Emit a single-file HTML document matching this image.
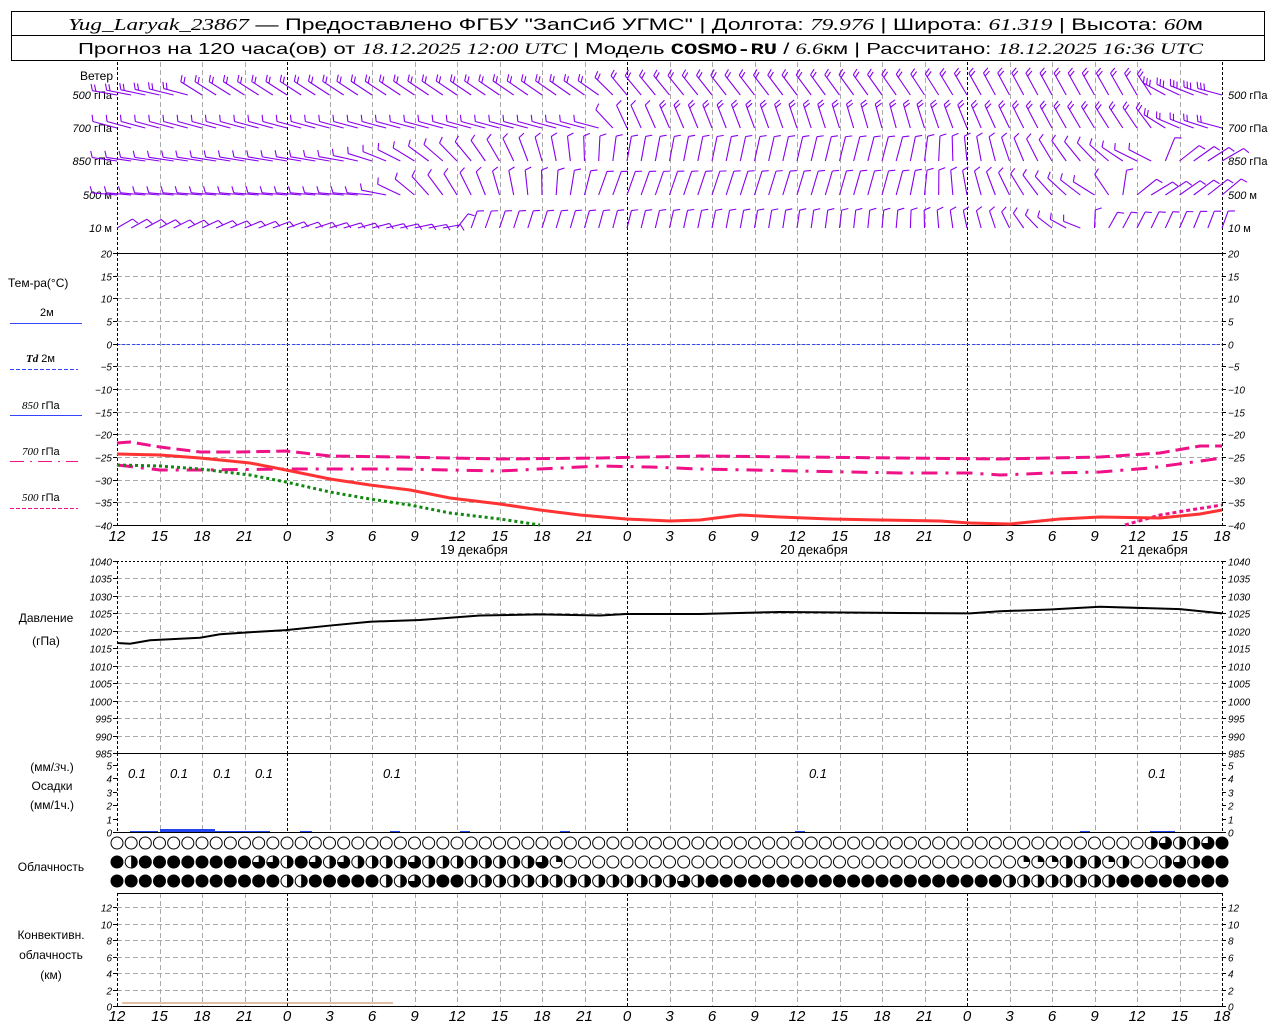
<!DOCTYPE html>
<html><head><meta charset="utf-8"><style>
html,body{margin:0;padding:0;background:#fff;}
svg{display:block;}
text{font-family:"Liberation Sans",sans-serif;fill:#000;}
.it{font-family:"Liberation Serif",serif;font-style:italic;}
.n{font-family:"Liberation Sans",sans-serif;font-style:italic;font-size:10px;}
</style></head><body>
<svg id="s" xmlns="http://www.w3.org/2000/svg" width="1280" height="1024" viewBox="0 0 1280 1024">
<rect x="0" y="0" width="1280" height="1024" fill="#fff"/>
<rect x="11.5" y="11.5" width="1253" height="49" fill="none" stroke="#000"/>
<line x1="11" y1="35.5" x2="1265" y2="35.5" stroke="#000"/>
<text x="68" y="30" font-size="17" textLength="1135" lengthAdjust="spacingAndGlyphs"><tspan class="it">Yug_Laryak_23867</tspan> — Предоставлено ФГБУ "ЗапСиб УГМС" | Долгота: <tspan class="it">79.976</tspan> | Широта: <tspan class="it">61.319</tspan> | Высота: <tspan class="it">60</tspan>м</text>
<text x="78" y="54" font-size="16" textLength="1125" lengthAdjust="spacingAndGlyphs">Прогноз на 120 часа(ов) от <tspan class="it">18.12.2025 12:00 UTC</tspan>  | Модель <tspan font-family="Liberation Mono" font-weight="bold">COSMO-RU</tspan> / <tspan class="it">6.6</tspan>км | Рассчитано: <tspan class="it">18.12.2025 16:36 UTC</tspan></text>

<g font-size="12">
<text x="113" y="80" text-anchor="end">Ветер</text>
<text x="26" y="362" font-size="11"><tspan class="it" font-weight="bold">Td</tspan>   2м</text>
<text x="8" y="287">Тем-ра(°С)</text>
<text x="40" y="316" font-size="11">2м</text>
<text x="22" y="409" font-size="11"><tspan class="it">850</tspan> гПа</text>
<text x="22" y="455" font-size="11"><tspan class="it">700</tspan> гПа</text>
<text x="22" y="501" font-size="11"><tspan class="it">500</tspan> гПа</text>
<text x="46" y="622" text-anchor="middle">Давление</text>
<text x="46" y="645" text-anchor="middle">(гПа)</text>
<text x="52" y="771" text-anchor="middle">(мм/<tspan class="it">3</tspan>ч.)</text>
<text x="52" y="790" text-anchor="middle">Осадки</text>
<text x="52" y="809" text-anchor="middle">(мм/1ч.)</text>
<text x="51" y="871" text-anchor="middle">Облачность</text>
<text x="51" y="939" text-anchor="middle">Конвективн.</text>
<text x="51" y="959" text-anchor="middle">облачность</text>
<text x="51" y="979" text-anchor="middle">(км)</text>
</g>
<line x1="10" y1="323.5" x2="82" y2="323.5" stroke="#3344ff"/>
<line x1="10" y1="369.5" x2="78" y2="369.5" stroke="#3344ff" stroke-dasharray="4,2"/>
<line x1="10" y1="415.5" x2="82" y2="415.5" stroke="#3344ff"/>
<line x1="10" y1="461.5" x2="78" y2="461.5" stroke="#ee1188" stroke-dasharray="14,6,2,6"/>
<line x1="10" y1="508.5" x2="78" y2="508.5" stroke="#ee1188" stroke-dasharray="4,2"/>
<g font-size="13" text-anchor="middle">
<text x="474" y="554">19 декабря</text>
<text x="814" y="554">20 декабря</text>
<text x="1154" y="554">21 декабря</text>
</g>
<g id="g"></g>
</svg>
<script>
var S=document.getElementById('g'),NS='http://www.w3.org/2000/svg';
function el(t,a,txt){var e=document.createElementNS(NS,t);for(var k in a)e.setAttribute(k,a[k]);if(txt!==undefined)e.textContent=txt;S.appendChild(e);return e;}
function X(h){return 117+h*14.1667;}
var panels=[[62,253],[253,525],[561,753],[753,832],[893,1006]];
for(var k=1;k<26;k++){var x=Math.round(117+k*42.5)+0.5;var mid=(k%8==4);
 panels.forEach(function(p){el('line',{x1:x,y1:p[0],x2:x,y2:p[1],stroke:mid?'#000':'#aaa','stroke-dasharray':mid?'3,2':'5,3'});});}
function hgrid(y0,y1,n,labs){for(var i=0;i<=n;i++){var y=y0+(y1-y0)*i/n;y=Math.round(y)+0.5;
 if(i>0&&i<n)el('line',{x1:117,y1:y,x2:1222,y2:y,stroke:'#aaa','stroke-dasharray':'5,3'});
 el('line',{x1:113,y1:y,x2:117,y2:y,stroke:'#000'});el('line',{x1:1222,y1:y,x2:1226,y2:y,stroke:'#000'});
 el('text',{x:112,y:y+4,'text-anchor':'end','class':'n'},labs[i]);el('text',{x:1228,y:y+4,'class':'n'},labs[i]);}}
var tl=[];for(var v=20;v>=-40;v-=5)tl.push(v==0?'0':(v<0?'\u2212'+(-v):v));hgrid(253,525,12,tl);
el('line',{x1:117,y1:344.5,x2:1222,y2:344.5,stroke:'#3344ff','stroke-dasharray':'3,2'});
var pl=[];for(v=1040;v>=985;v-=5)pl.push(v);hgrid(561,753,11,pl);
for(i=0;i<=5;i++){var y=Math.round(832-i*13.4)+0.5;el('line',{x1:113,y1:y,x2:117,y2:y,stroke:'#000'});el('line',{x1:1222,y1:y,x2:1226,y2:y,stroke:'#000'});
 el('text',{x:112,y:y+4,'text-anchor':'end','class':'n'},i);el('text',{x:1228,y:y+4,'class':'n'},i);}
for(i=0;i<7;i++){var y=Math.round(1006-i*16.5)+0.5;if(i>0)el('line',{x1:117,y1:y,x2:1222,y2:y,stroke:'#aaa','stroke-dasharray':'5,3'});
 el('line',{x1:113,y1:y,x2:117,y2:y,stroke:'#000'});el('line',{x1:1222,y1:y,x2:1226,y2:y,stroke:'#000'});
 el('text',{x:112,y:y+4,'text-anchor':'end','class':'n'},i*2);el('text',{x:1228,y:y+4,'class':'n'},i*2);}
[253.5,525.5,753.5,832.5,893.5,1006.5].forEach(function(a){el('line',{x1:117,y1:a,x2:1222,y2:a,stroke:'#000'});});
el('line',{x1:117,y1:561.5,x2:1222,y2:561.5,stroke:'#000','stroke-dasharray':'2,2'});
[117.5,1222.5].forEach(function(x){panels.forEach(function(p){el('line',{x1:x,y1:p[0],x2:x,y2:p[1],stroke:'#000','stroke-dasharray':'3,2'});});});
var labs=[];for(var k=0;k<=26;k++)labs.push((12+3*k)%24);
labs.forEach(function(h,k){var x=117+k*42.5;
 el('text',{x:x,y:541,'text-anchor':'middle','font-size':15,'font-style':'italic'},h);
 el('text',{x:x,y:1021,'text-anchor':'middle','font-size':15,'font-style':'italic'},h);});
function pts(a){return a.map(function(p){return p.join(',');}).join(' ');}
function pl2(a,st){var o={points:pts(a),fill:'none'};for(var k in st)o[k]=st[k];el('polyline',o);}
pl2([[117,443],[130,442],[160,447],[200,452],[240,452],[286,451],[330,456],[400,457],[500,459],[600,458],[700,456],[800,457],[900,458],[1000,459],[1100,457],[1160,453],[1200,446],[1222,446]],{stroke:'#ee1188','stroke-width':3,'stroke-dasharray':'14,6'});
pl2([[117,465],[160,470],[200,470],[286,469],[400,469],[500,471],[600,466],[650,467],[700,469],[800,471],[900,473],[970,473],[1000,475],[1050,473],[1100,472],[1150,468],[1222,458]],{stroke:'#ee1188','stroke-width':3,'stroke-dasharray':'16,8,3,8'});
pl2([[1125,525],[1160,515],[1190,510],[1222,505]],{stroke:'#ee1188','stroke-width':3,'stroke-dasharray':'4,3'});
pl2([[117,465],[160,466],[200,469],[250,475],[286,482],[330,492],[370,499],[410,505],[450,513],[500,519],[540,525]],{stroke:'#118811','stroke-width':3,'stroke-dasharray':'3,3'});
pl2([[117,454],[160,455],[200,458],[250,463],[286,470],[330,479],[370,485],[410,490],[450,498],[500,504],[540,510],[580,515],[626,519],[670,521],[700,520],[740,515],[780,517],[830,519],[880,520],[940,521],[970,523],[1010,524],[1060,519],[1100,517],[1160,518],[1200,514],[1222,510]],{stroke:'#ff3333','stroke-width':3});
var pr=[[117,1016.5],[130,1016.3],[150,1017.3],[200,1018],[220,1019],[250,1019.6],[286,1020.2],[330,1021.5],[370,1022.6],[420,1023.1],[480,1024.4],[540,1024.7],[600,1024.4],[626,1024.8],[700,1024.8],[780,1025.4],[900,1025.1],[970,1025],[1000,1025.6],[1050,1026.1],[1100,1026.9],[1180,1026.2],[1222,1025]];
pl2(pr.map(function(p){return [p[0],561+(1040-p[1])*3.49];}),{stroke:'#000','stroke-width':2});
[[130,158,1],[160,215,3],[215,270,1],[300,312,1],[390,400,1],[460,470,1],[560,570,1],[795,805,1],[1080,1090,1],[1150,1175,1]].forEach(function(b){el('rect',{x:b[0],y:832-b[2],width:b[1]-b[0],height:b[2],fill:'#2244ee'});});
[137,179,222,264,392,818,1157].forEach(function(x){el('text',{x:x,y:778,'text-anchor':'middle','font-size':13,'font-style':'italic'},'0.1');});
el('line',{x1:122,y1:1003,x2:393,y2:1003,stroke:'#c08050','stroke-width':1});
var rows=[
'O'.repeat(73)+'HQHHQF',
'FHFFFFFFFFQQHFQHQHHHHQHHHHHHHHQC'+'O'.repeat(31)+'OCCCHHHCHOO'+'HQHFF',
'FFFFFFFFFFFFHHFFFFFHHQHFFHHHHHHHHHHHHHHHQH'+'F'.repeat(21)+'HHHHHHHH'+'FFFFFFFF'];
rows.forEach(function(r,ri){var y=843+ri*19;for(var i=0;i<79;i++){var c=r[i]||'F';var x=X(i);
 if(c=='F'){el('circle',{cx:x,cy:y,r:6.5,fill:'#000'});continue;}
 el('circle',{cx:x,cy:y,r:6,fill:'#fff',stroke:'#000','stroke-width':1});
 if(c=='H')el('path',{d:'M'+x+','+(y-6.5)+'A6.5,6.5 0 0 1 '+x+','+(y+6.5)+'Z',fill:'#000'});
 if(c=='Q')el('path',{d:'M'+x+','+y+'L'+x+','+(y-6.5)+'A6.5,6.5 0 1 1 '+(x-6.5)+','+y+'Z',fill:'#000'});
 if(c=='C')el('path',{d:'M'+x+','+y+'L'+x+','+(y-6.5)+'A6.5,6.5 0 0 1 '+(x+6.5)+','+y+'Z',fill:'#000'});
}});
function interp(k,x){for(var i=0;i<k.length-1;i++){if(x<=k[i+1][0]){var t=(x-k[i][0])/(k[i+1][0]-k[i][0]);return k[i][1]+t*(k[i+1][1]-k[i][1]);}}return k[k.length-1][1];}
var lv=[
[95,'500',[[117,10],[190,15],[195,32],[600,35],[620,50],[900,55],[1000,62],[1150,60],[1160,30],[1222,15]],[[117,2],[190,2],[195,2],[1150,2],[1160,3],[1222,3]]],
[128,'700',[[117,15],[600,15],[620,65],[900,75],[1000,65],[1150,55],[1170,25],[1222,15]],[[117,1],[1222,2]]],
[161,'850',[[117,8],[350,10],[500,60],[620,100],[900,105],[980,80],[1100,45],[1150,20],[1170,140],[1222,150]],[[117,1],[1222,1]]],
[195,'500',[[117,5],[380,5],[420,45],[600,110],[900,105],[980,75],[1100,30],[1140,150],[1222,140]],[[117,1],[1222,1]]],
[228,'10',[[117,150],[450,170],[460,110],[900,95],[1000,70],[1080,20],[1100,120],[1222,110]],[[117,1],[1222,1]]]];
lv.forEach(function(L,li){var by=L[0];
 var unit=(li<3)?' гПа':'   м';
 var t1=el('text',{x:112,y:by+4,'text-anchor':'end','font-size':11});t1.innerHTML='<tspan font-style="italic">'+L[1]+'</tspan>'+unit;
 var t2=el('text',{x:1228,y:by+4,'font-size':11});t2.innerHTML='<tspan font-style="italic">'+L[1]+'</tspan>'+unit;
 for(var i=0;i<79;i++){var bx=X(i);var a=interp(L[2],bx)*Math.PI/180;var n=Math.round(interp(L[3],bx));
  var len=li==4?18:25;var ux=-Math.cos(a),uy=-Math.sin(a);var tx=bx+len*ux,ty=by+len*uy;
  el('line',{x1:bx,y1:by,x2:tx,y2:ty,stroke:'#8800ee','stroke-width':1.1});
  var px=Math.sin(a),py=-Math.cos(a);
  for(var f=0;f<n;f++){var sx=tx-ux*f*3.5,sy=ty-uy*f*3.5;
   el('line',{x1:sx,y1:sy,x2:sx+7*(px*0.9+ux*0.35),y2:sy+7*(py*0.9+uy*0.35),stroke:'#8800ee','stroke-width':1.1});}
 }});
</script>
</body></html>
